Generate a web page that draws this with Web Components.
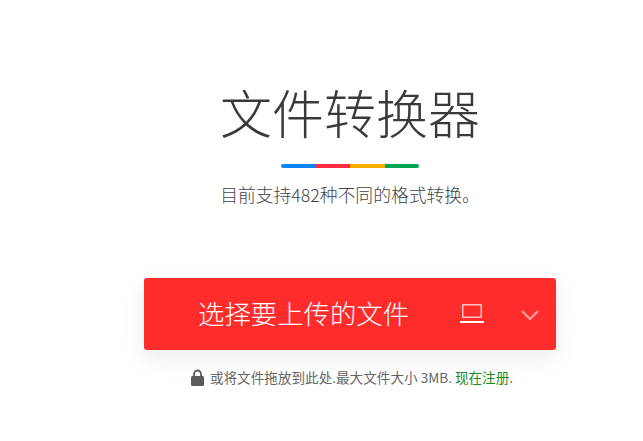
<!DOCTYPE html>
<html lang="zh"><head><meta charset="utf-8"><style>
html,body{margin:0;background:#fff;overflow:hidden}
body{font-family:"Noto Sans CJK SC","Open Sans",sans-serif}
</style></head><body>
<converter-page></converter-page>
<script>
function def(name, html){
  customElements.define(name, class extends HTMLElement{
    constructor(){super();this.attachShadow({mode:'open'}).innerHTML=html;}
  });
}
def('color-rule',`<style>:host{display:flex;width:138px;height:4px;border-radius:2px;overflow:hidden}
i{flex:1}</style><i style="background:#0a84f0"></i><i style="background:#fe2a3f"></i><i style="background:#ffad00"></i><i style="background:#00a651"></i>`);
def('upload-button',`<style>:host{display:flex;align-items:center;box-sizing:border-box;width:412px;height:72px;background:#ff2c2c;border-radius:3px;color:#fff;box-shadow:0 8px 24px rgba(0,0,0,.08)}
.label{margin:0 0 1px 54px;width:211px;font-size:26.4px;font-weight:300;white-space:nowrap;line-height:1}
.dev{margin-left:51px;width:24px;height:24px;display:block}
.chev{margin:3px 0 0 37px;width:18px;height:11px;display:block}</style>
<span class="label"><slot></slot></span>
<svg class="dev" viewBox="0 0 24 24" fill="none" stroke="#fff"><rect x="2.75" y="2.75" width="18.5" height="12.5" stroke="#ffc4c4" stroke-width="1.5"/><path d="M0 20h24" stroke-width="2"/></svg>
<svg class="chev" viewBox="0 0 18 11" fill="none" stroke="#ff9c9c" stroke-width="2.4"><path d="M1 1l8 8 8-8"/></svg>`);
def('upload-hint',`<style>:host{display:flex;align-items:center;font-size:13.6px;color:#666;white-space:nowrap;line-height:18px}
svg{width:13px;height:17px;margin-right:6px;display:block}
a{color:#1a8a1a;text-decoration:none;margin:0 0 0 3px}</style>
<svg viewBox="0 0 13 17"><path d="M3 7.5V5a3.5 3.5 0 0 1 7 0v2.5" fill="none" stroke="#5a5a5a" stroke-width="1.8"/><rect x="0" y="7" width="13" height="10" rx="1.5" fill="#5a5a5a"/></svg>
<span><slot></slot></span><a><slot name="link"></slot></a><span>.</span>`);
def('converter-page',`<style>:host{display:flex;flex-direction:column;align-items:center;box-sizing:border-box;width:643px;height:441px;padding:0 0 0 57px;color:#3c3c3c}
h1{margin:76px 0 0;font-size:52px;line-height:72px;font-weight:300;color:#3a3a3a;white-space:nowrap}
color-rule{margin-top:16px}
p{margin:13px 0 0;font-size:17.8px;line-height:26px;font-weight:300;color:#444;white-space:nowrap}
upload-button{margin-top:71px}
upload-hint{margin:18px 0 0 4px}</style>
<h1>文件转换器</h1>
<color-rule></color-rule>
<p>目前支持482种不同的格式转换。</p>
<upload-button>选择要上传的文件</upload-button>
<upload-hint>或将文件拖放到此处.最大文件大小 3MB.<span slot="link">现在注册</span></upload-hint>`);
</script>
</body></html>
